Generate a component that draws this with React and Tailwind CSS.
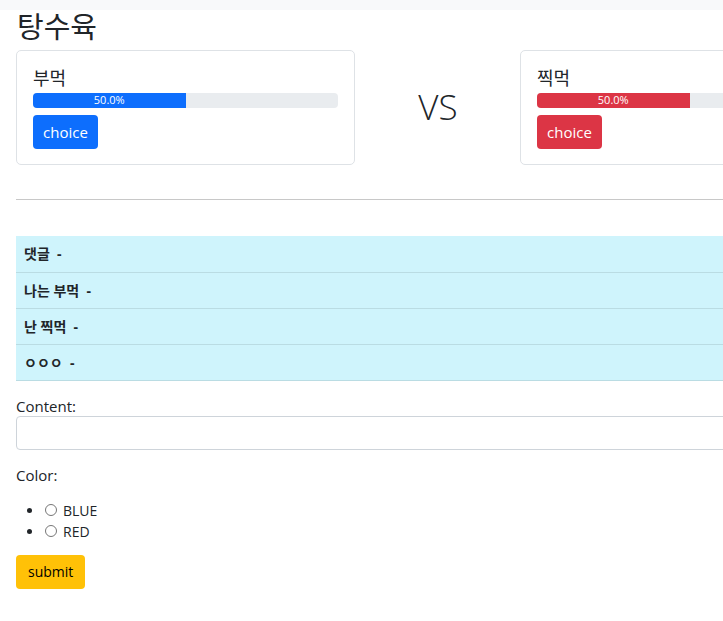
import React from 'react';

const font = { fontFamily: '"Open Sans", "Noto Sans CJK KR", sans-serif' };

const comments = ['댓글', '나는 부먹', '난 찍먹', 'ㅇㅇㅇ'];

const ChoiceCard = ({ title, color }) => (
  <div className="border border-[#dee2e6] rounded-[5px] p-4 w-[339px] h-[115px]">
    <div className="text-[18px] leading-[22px] h-[26px] text-[#212529]">{title}</div>
    <div className="w-full h-[15px] bg-[#e9ecef] rounded-[4px] overflow-hidden flex">
      <div className={`w-1/2 h-full flex items-center justify-center text-white text-[11px] ${color}`}>
        50.0%
      </div>
    </div>
    <button className={`mt-[7px] h-[34px] px-[10px] rounded-[4px] text-white text-[15px] ${color}`}>
      choice
    </button>
  </div>
);

export default function App() {
  return (
    <div className="w-[723px] h-[621px] overflow-hidden bg-white text-[#212529]" style={font}>
      <div className="h-[10px] bg-[#f8f9fa]"></div>
      <div className="px-4 w-[880px]">
        <h3 className="text-[29px] leading-[34px] h-[40px] pl-[1px]">탕수육</h3>

        <div className="grid grid-cols-[339px_165px_339px] items-center">
          <ChoiceCard title="부먹" color="bg-[#0d6efd]" />
          <div className="text-center text-[35px] font-light pl-[1px]">VS</div>
          <ChoiceCard title="찍먹" color="bg-[#dc3545]" />
        </div>

        <hr className="mt-[34px] border-t border-[#c8c8c8]" />

        <table className="mt-[36px] w-full text-[14px] font-bold">
          <tbody>
            {comments.map((c) => (
              <tr key={c} className="bg-[#cff4fc] border-b border-[#badce3] h-9">
                <td className="px-2 align-middle">{c}&nbsp; -</td>
              </tr>
            ))}
          </tbody>
        </table>

        <form className="mt-[14px] text-[15px]">
          <div className="leading-[22px] h-[22px]">Content:</div>
          <input
            type="text"
            className="block w-full h-[34px] border border-[#ced4da] rounded-[4px] -mt-[1px]"
          />
          <div className="mt-[14px] leading-[22px]">Color:</div>
          <ul className="mt-[14px] pl-[28px] list-disc text-[14px] leading-[21px]">
            <li>
              <label className="flex items-center gap-[6px]">
                <input type="radio" name="color" className="w-[12px] h-[12px] m-0 ml-[1px]" />
                BLUE
              </label>
            </li>
            <li>
              <label className="flex items-center gap-[6px]">
                <input type="radio" name="color" className="w-[12px] h-[12px] m-0 ml-[1px]" />
                RED
              </label>
            </li>
          </ul>
          <button type="button" className="mt-[13px] h-[34px] px-3 rounded-[4px] bg-[#ffc107] text-[14px] text-black">
            submit
          </button>
        </form>
      </div>
    </div>
  );
}
